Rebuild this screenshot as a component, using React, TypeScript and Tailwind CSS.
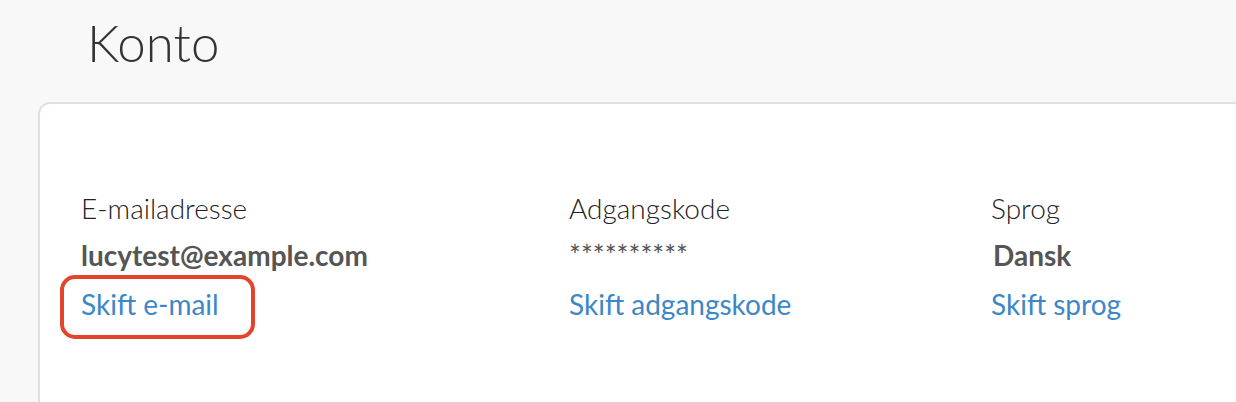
import React from "react";

export default function App() {
  const font = { fontFamily: "Lato, 'Noto Sans', sans-serif" };
  return (
    <div className="w-[1236px] h-[402px] overflow-hidden bg-[#f8f8f8]" style={font}>
      <div className="pl-[87px] pt-[12px] h-[102px]">
        <h1 className="text-[51px] font-light text-[#333333] leading-[62px]">Konto</h1>
      </div>
      <div className="ml-[38px] w-[1260px] h-[340px] bg-white border-2 border-[#e0e0e0] rounded-[12px] pt-[80px] pl-[41px]">
        <div className="flex">
          <div className="w-[488px] flex flex-col">
            <div className="text-[28px] font-light text-[#222222] leading-[48px]">E-mailadresse</div>
            <div className="text-[28px] font-bold text-[#555555] leading-[48px] -mt-px">lucytest@example.com</div>
            <div className="relative mt-[1px] w-fit">
              <a className="text-[28px] text-[#3d87c7] leading-[48px] block">Skift e-mail</a>
              <div className="absolute left-[-21px] right-[-36px] top-[-5px] bottom-[-11px] border-[4px] border-[#e3442b] rounded-[15px]" />
            </div>
          </div>
          <div className="w-[422px] flex flex-col">
            <div className="text-[28px] font-light text-[#222222] leading-[48px]">Adgangskode</div>
            <div className="text-[28px] text-[#555555] leading-[48px] -mt-px">**********</div>
            <a className="text-[28px] text-[#3d87c7] leading-[48px] mt-[1px] block">Skift adgangskode</a>
          </div>
          <div className="flex flex-col">
            <div className="text-[28px] font-light text-[#222222] leading-[48px]">Sprog</div>
            <div className="text-[28px] font-bold text-[#555555] leading-[48px] -mt-px pl-[2px]">Dansk</div>
            <a className="text-[28px] text-[#3d87c7] leading-[48px] mt-[1px] block">Skift sprog</a>
          </div>
        </div>
      </div>
    </div>
  );
}
